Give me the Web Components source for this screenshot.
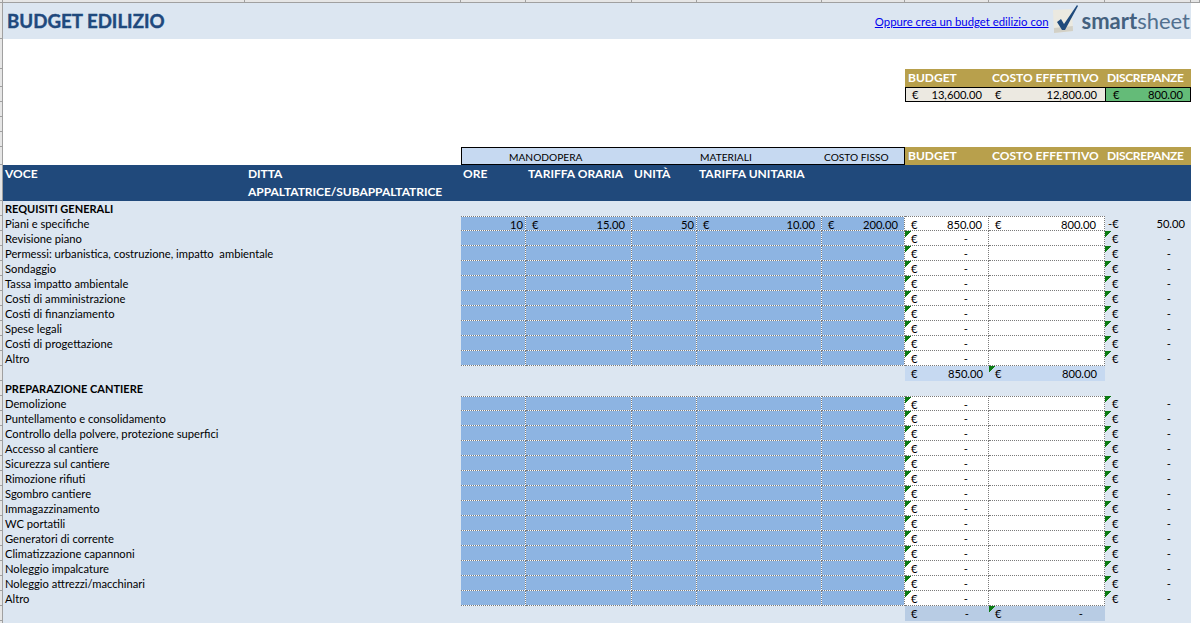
<!DOCTYPE html>
<html>
<head>
<meta charset="utf-8">
<title>Budget edilizio</title>
<style>
  html, body { margin: 0; padding: 0; background: #fff; overflow: hidden; }
  body { width: 1200px; height: 623px; font-family: 'Lato', 'Liberation Sans', sans-serif; }
</style>
</head>
<body>
<budget-sheet></budget-sheet>

<script>
const COLS = [242, 216, 65, 106, 65, 125, 83, 84, 116, 86];
const GRID = COLS.map(w => `${w}px`).join(' ');

// shared cell styles for anything sitting on the sheet's column grid
const rowStyle = `
  :host {
    display: grid;
    grid-template-columns: ${GRID};
    height: 15px;
    font-size: 11.2px;
    line-height: 15px;
    color: #000;
    background: #dce6f1;
  }
  .c { box-sizing: border-box; height: 15px; padding: 0 2px; white-space: pre; overflow: hidden; }
  .span2 { grid-column: span 2; }
  .input, .calc {
    border-right: 1px dotted #7a7a7a;
    border-bottom: 1px dotted #7a7a7a;
  }
  .input { background: linear-gradient(#8db4e2, #8db4e2) padding-box, linear-gradient(#fff, #fff) border-box; }
  .calc { background-color: #fff; }
  .top { border-top: 1px dotted #7a7a7a; }
  .money { display: flex; justify-content: space-between; padding: 0 6px 0 6px; }
  .wide { padding-right: 8px; }
  .num { text-align: right; padding-right: 2px; }
  .flag {
    background-image: linear-gradient(135deg, #0b7a12 50%, transparent 51%);
    background-size: 6px 6px;
    background-repeat: no-repeat;
  }
  .dash { padding-right: 14px; }
  .last { padding-left: 7px; }
`;

const money = (val, cls = '') => `<div class="c money ${cls}"><span>€</span><span class="${val === '-' ? 'dash' : ''}">${val}</span></div>`;

class SheetGutter extends HTMLElement {
  constructor() {
    super();
    const side = this.getAttribute('side');
    const sizes = side === 'top'
      ? [3, ...COLS, 9]
      : [36, 30, 18, 15, 15, 15, 15, 18, 36, ...Array(28).fill(15)];
    this.attachShadow({mode: 'open'}).innerHTML = `
      <style>
        :host { display: flex; background: #e6e6e6; overflow: hidden; }
        :host([side="top"]) { height: 3px; box-sizing: border-box; border-bottom: 1px solid #a0a0a0; grid-column: span 2; }
        :host([side="left"]) { flex-direction: column; width: 3px; box-sizing: border-box; border-right: 1px solid #a0a0a0; }
        div { box-sizing: border-box; flex: none; }
        :host([side="top"]) div { border-right: 1px solid #a0a0a0; }
        :host([side="left"]) div { border-bottom: 1px solid #a0a0a0; }
      </style>
      ${sizes.map(s => `<div style="${side === 'top' ? 'width' : 'height'}:${s}px"></div>`).join('')}
    `;
  }
}
customElements.define('sheet-gutter', SheetGutter);

class BudgetTitle extends HTMLElement {
  constructor() {
    super();
    this.attachShadow({mode: 'open'}).innerHTML = `
      <style>
        :host { display: flex; align-items: center; height: 36px; width: 1188px; background: #dce6f1; }
        h1 { margin: 0 0 0 4px; font-size: 18.7px; font-weight: 700; color: #1f497d; flex: 1; -webkit-text-stroke: .4px #1f497d; }
        a { font-size: 11.35px; color: #0000ee; text-decoration: underline; margin-right: 3px; }
        svg { display: block; }
        .brand { font-size: 22px; margin-right: 1px; color: #52708f; line-height: 36px; }
        .brand b { font-weight: 700; color: #44617f; }
      </style>
      <h1><slot name="title"></slot></h1>
      <a href="#"><slot name="link"></slot></a>
      <svg width="30" height="32" viewBox="0 0 30 32">
        <path d="M1 5 L20 4 L21 26 L2 28 Z" fill="#ebe9e0"/>
        <path d="M2 23 L20.8 21 L21 26 L2 28 Z" fill="#d2d0c6"/>
        <path d="M5 17 L9 14 L12 19 L25 0 L26 1 L13 25 L10 25 Z" fill="#1f4a7c"/>
      </svg>
      <span class="brand"><b>smart</b>sheet</span>
    `;
  }
}
customElements.define('budget-title', BudgetTitle);

class BudgetBlank extends HTMLElement {
  constructor() {
    super();
    this.attachShadow({mode: 'open'}).innerHTML = `
      <style>
        :host { display: block; background: #fff; height: var(--h, 15px); }
      </style>
    `;
  }
}
customElements.define('budget-blank', BudgetBlank);

class BudgetSummary extends HTMLElement {
  constructor() {
    super();
    this.attachShadow({mode: 'open'}).innerHTML = `
      <style>
        :host { display: grid; grid-template-columns: 902px 84px 116px 86px; grid-template-rows: 18px 15px; font-size: 12px; }
        .g { background: #b8a04c; color: #fff; font-weight: 700; line-height: 18px; padding-left: 3px; white-space: nowrap; }
        .d { letter-spacing: -.35px; padding-left: 2px; }
        .v { box-sizing: border-box; background: #ece9e1; font-size: 11.2px; line-height: 13px; border: solid #000; border-width: 1px 0 1px 0; display: flex; justify-content: space-between; padding: 0 8px 0 6px; }
        .v.first { border-left-width: 1px; padding-right: 7px; }
        .v.last { background: #64bb78; border-width: 1px; padding: 0 7px; }
        .sp { grid-row: span 2; }
      </style>
      <div class="sp"></div>
      <div class="g">BUDGET</div>
      <div class="g">COSTO EFFETTIVO</div>
      <div class="g d">DISCREPANZE</div>
      <div class="v first"><span>€</span><span>13,600.00</span></div>
      <div class="v"><span>€</span><span>12,800.00</span></div>
      <div class="v last"><span>€</span><span>800.00</span></div>
    `;
  }
}
customElements.define('budget-summary', BudgetSummary);

class BudgetHeader extends HTMLElement {
  constructor() {
    super();
    this.attachShadow({mode: 'open'}).innerHTML = `
      <style>
        :host { display: grid; grid-template-columns: ${GRID}; grid-template-rows: 18px 18px 18px; font-size: 12px; line-height: 18px; font-weight: 700; color: #fff; }
        .band { grid-column: 3 / span 5; box-sizing: border-box; height: 18px; background: #c6d9f1; border: 1px solid #000; color: #000; font-weight: 400; font-size: 10.2px; line-height: 19px; display: grid; grid-template-columns: 238px 124px 1fr; }
        .band span:first-child { padding-left: 47px; }
        .g { background: #b8a04c; padding-left: 3px; white-space: nowrap; }
        .d { letter-spacing: -.35px; padding-left: 2px; }
        .n { background: #20497b; padding-left: 2px; white-space: nowrap; }
        .ditta { padding-left: 3px; letter-spacing: -.04px; }
        .n2 { grid-row: span 2; }
        .white { grid-column: span 2; }
      </style>
      <div class="white"></div>
      <div class="band"><span>MANODOPERA</span><span>MATERIALI</span><span>COSTO FISSO</span></div>
      <div class="g">BUDGET</div>
      <div class="g">COSTO EFFETTIVO</div>
      <div class="g d">DISCREPANZE</div>

      <div class="n n2">VOCE</div>
      <div class="n n2 ditta">DITTA<br>APPALTATRICE/SUBAPPALTATRICE</div>
      <div class="n n2">ORE</div>
      <div class="n n2">TARIFFA ORARIA</div>
      <div class="n n2">UNITÀ</div>
      <div class="n n2">TARIFFA UNITARIA</div>
      <div class="n n2"></div>
      <div class="n n2"></div>
      <div class="n n2"></div>
      <div class="n n2"></div>
    `;
  }
}
customElements.define('budget-header', BudgetHeader);

// plain band row: section title, or spacer when there is no slotted text
class BudgetSection extends HTMLElement {
  constructor() {
    super();
    this.attachShadow({mode: 'open'}).innerHTML = `
      <style>${rowStyle}
        :host { grid-template-columns: 1fr; font-weight: 700; font-size: 11px; }
      </style>
      <div class="c"><slot></slot></div>
    `;
  }
}
customElements.define('budget-section', BudgetSection);

// one item line; "filled" gives the worked example at the top of the sheet
class BudgetRow extends HTMLElement {
  constructor() {
    super();
    const filled = this.hasAttribute('filled');
    const top = this.hasAttribute('first') ? 'top' : '';
    const cell = `<div class="c input ${top}"></div>`;
    this.attachShadow({mode: 'open'}).innerHTML = `
      <style>${rowStyle}</style>
      <div class="c span2"><slot></slot></div>
      ${filled ? `
        <div class="c input num ${top}">10</div>
        ${money('15.00', `input ${top}`)}
        <div class="c input num ${top}">50</div>
        ${money('10.00', `input ${top}`)}
        ${money('200.00', `input ${top}`)}
        ${money('850.00', `calc ${top}`)}
        ${money('800.00', `calc wide ${top}`)}
        <div class="c money"><span style="margin-left:-3px">-€</span><span>50.00</span></div>
      ` : `
        ${cell.repeat(5)}
        <div class="c calc money flag ${top}"><span>€</span><span class="dash">-</span></div>
        <div class="c calc ${top}"></div>
        <div class="c money flag last"><span>€</span><span class="dash">-</span></div>
      `}
    `;
  }
}
customElements.define('budget-row', BudgetRow);

class BudgetTotal extends HTMLElement {
  constructor() {
    super();
    const a = this.getAttribute('budget');
    const b = this.getAttribute('actual');
    const bg = this.getAttribute('tone') || '#c6d9f1';
    this.attachShadow({mode: 'open'}).innerHTML = `
      <style>${rowStyle}
        .t { background-color: ${bg}; }
      </style>
      <div class="c" style="grid-column: span 7"></div>
      ${money(a, 't')}
      ${money(b, 't flag wide')}
      <div class="c"></div>
    `;
  }
}
customElements.define('budget-total', BudgetTotal);

class BudgetSheet extends HTMLElement {
  constructor() {
    super();
    const first = ['Piani e specifiche', 'Revisione piano', 'Permessi: urbanistica, costruzione, impatto  ambientale', 'Sondaggio', 'Tassa impatto ambientale', 'Costi di amministrazione', 'Costi di finanziamento', 'Spese legali', 'Costi di progettazione', 'Altro'];
    const second = ['Demolizione', 'Puntellamento e consolidamento', 'Controllo della polvere, protezione superfici', 'Accesso al cantiere', 'Sicurezza sul cantiere', 'Rimozione rifiuti', 'Sgombro cantiere', 'Immagazzinamento', 'WC portatili', 'Generatori di corrente', 'Climatizzazione capannoni', 'Noleggio impalcature', 'Noleggio attrezzi/macchinari', 'Altro'];
    this.attachShadow({mode: 'open'}).innerHTML = `
      <style>
        :host { display: grid; grid-template-columns: 3px 1188px 9px; grid-template-rows: 3px 620px; width: 1200px; height: 623px; overflow: hidden; background: #fff; }
        sheet-gutter[side="top"] { grid-column: 1 / span 3; }
      </style>
      <sheet-gutter side="top"></sheet-gutter>
      <sheet-gutter side="left"></sheet-gutter>
      <div>
        <budget-title>
          <span slot="title">BUDGET EDILIZIO</span>
          <span slot="link">Oppure crea un budget edilizio con</span>
        </budget-title>
        <budget-blank style="--h:30px"></budget-blank>
        <budget-summary></budget-summary>
        <budget-blank style="--h:45px"></budget-blank>
        <budget-header></budget-header>
        <budget-section>REQUISITI GENERALI</budget-section>
        ${first.map((t, i) => `<budget-row ${i === 0 ? 'filled first' : ''}>${t}</budget-row>`).join('')}
        <budget-total budget="850.00" actual="800.00"></budget-total>
        <budget-section>PREPARAZIONE CANTIERE</budget-section>
        ${second.map((t, i) => `<budget-row ${i === 0 ? 'first' : ''}>${t}</budget-row>`).join('')}
        <budget-total budget="-" actual="-" tone="#b8cce4"></budget-total>
        <budget-section></budget-section>
      </div>
    `;
  }
}
customElements.define('budget-sheet', BudgetSheet);
</script>
</body>
</html>
